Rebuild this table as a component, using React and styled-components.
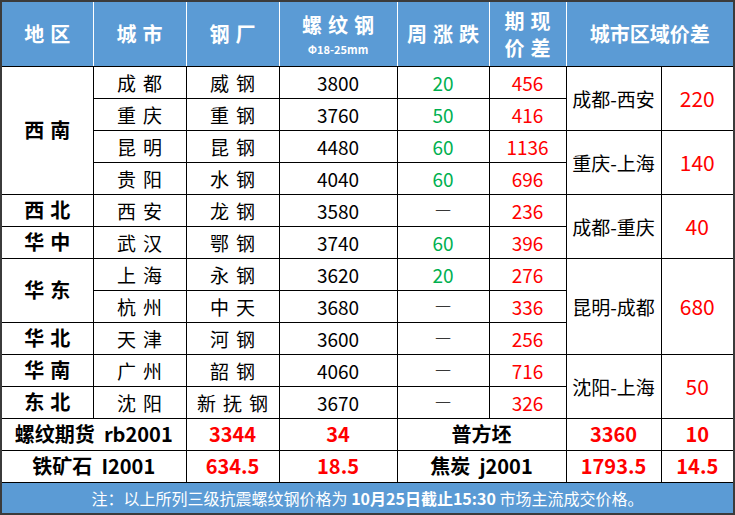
import React from "react";
import styled, { createGlobalStyle } from "styled-components";

const rows = [
  { region: "西南", span: 4, city: "成都", mill: "威钢", price: 3800, week: "20", basis: 456, diff: { name: "成都-西安", value: 220, span: 2 } },
  { city: "重庆", mill: "重钢", price: 3760, week: "50", basis: 416 },
  { city: "昆明", mill: "昆钢", price: 4480, week: "60", basis: 1136, diff: { name: "重庆-上海", value: 140, span: 2 } },
  { city: "贵阳", mill: "水钢", price: 4040, week: "60", basis: 696 },
  { region: "西北", span: 1, city: "西安", mill: "龙钢", price: 3580, week: null, basis: 236, diff: { name: "成都-重庆", value: 40, span: 2 } },
  { region: "华中", span: 1, city: "武汉", mill: "鄂钢", price: 3740, week: "60", basis: 396 },
  { region: "华东", span: 2, city: "上海", mill: "永钢", price: 3620, week: "20", basis: 276, diff: { name: "昆明-成都", value: 680, span: 3 } },
  { city: "杭州", mill: "中天", price: 3680, week: null, basis: 336 },
  { region: "华北", span: 1, city: "天津", mill: "河钢", price: 3600, week: null, basis: 256 },
  { region: "华南", span: 1, city: "广州", mill: "韶钢", price: 4060, week: null, basis: 716, diff: { name: "沈阳-上海", value: 50, span: 2 } },
  { region: "东北", span: 1, city: "沈阳", mill: "新抚钢", price: 3670, week: null, basis: 326 },
];

const futures = [
  { left: "螺纹期货\u00a0\u00a0rb2001", lp: "3344", lc: "34", right: "普方坯", rp: "3360", rc: "10" },
  { left: "铁矿石\u00a0\u00a0I2001", lp: "634.5", lc: "18.5", right: "焦炭\u00a0\u00a0j2001", rp: "1793.5", rc: "14.5" },
];

export default function App() {
  return (
    <>
      <GlobalStyle />
      <Frame>
        <Table>
          <colgroup>
            <col style={{ width: 91 }} />
            <col style={{ width: 93 }} />
            <col style={{ width: 93 }} />
            <col style={{ width: 118 }} />
            <col style={{ width: 92 }} />
            <col style={{ width: 77 }} />
            <col style={{ width: 95 }} />
            <col style={{ width: 72 }} />
          </colgroup>
          <thead>
            <HeadRow>
              <Th $spaced>地区</Th>
              <Th $spaced>城市</Th>
              <Th $spaced>钢厂</Th>
              <Th $spaced>
                <Main>螺纹钢</Main>
                <Sub>Φ18-25mm</Sub>
              </Th>
              <Th $spaced>周涨跌</Th>
              <Th $spaced $small>
                期现
                <br />
                价差
              </Th>
              <Th colSpan={2}>城市区域价差</Th>
            </HeadRow>
          </thead>
          <tbody>
            {rows.map((r, i) => (
              <Row key={i}>
                {r.region && (
                  <Region rowSpan={r.span}>{r.region}</Region>
                )}
                <Name>{r.city}</Name>
                <Name>{r.mill}</Name>
                <Num>{r.price}</Num>
                {r.week ? (
                  <Num $tone="green">{r.week}</Num>
                ) : (
                  <Dash>一</Dash>
                )}
                <Num $tone="red">{r.basis}</Num>
                {r.diff && (
                  <>
                    <Pair rowSpan={r.diff.span}>{r.diff.name}</Pair>
                    <Num $tone="red" $big rowSpan={r.diff.span}>
                      {r.diff.value}
                    </Num>
                  </>
                )}
              </Row>
            ))}
            {futures.map((f, i) => (
              <Row key={"f" + i}>
                <Bold colSpan={2}>{f.left}</Bold>
                <Bold $red>{f.lp}</Bold>
                <Bold $red>{f.lc}</Bold>
                <Bold colSpan={2}>{f.right}</Bold>
                <Bold $red>{f.rp}</Bold>
                <Bold $red>{f.rc}</Bold>
              </Row>
            ))}
            <FootRow>
              <Note colSpan={8}>
                注：以上所列三级抗震螺纹钢价格为 <strong>10月25日截止15:30</strong> 市场主流成交价格。
              </Note>
            </FootRow>
          </tbody>
        </Table>
      </Frame>
    </>
  );
}

//
// Styled Components
//
const GlobalStyle = createGlobalStyle`
  body {
    margin: 0;
    background: #fff;
    font-family: "Noto Sans CJK SC", "Noto Sans", sans-serif;
  }
`;

const Frame = styled.div`
  width: 735px;
  height: 515px;
  box-sizing: border-box;
  border: 2px solid #3b3b3b;
  overflow: hidden;
`;

const Table = styled.table`
  width: 731px;
  height: 511px;
  table-layout: fixed;
  border-collapse: collapse;
  border-style: hidden;
`;

const HeadRow = styled.tr`
  height: 64px;
  background: #5b9bd5;
`;

const Th = styled.th`
  padding: 0;
  padding-left: ${(p) => (p.$spaced ? "6px" : "0")};
  border: 1px solid #fff;
  border-bottom: 1px solid #000;
  color: #fff;
  font-size: 20px;
  font-weight: 700;
  line-height: ${(p) => (p.$small ? "27px" : "24px")};
  letter-spacing: ${(p) => (p.$spaced ? "6px" : "0")};
  text-align: center;
  vertical-align: middle;
`;

const Main = styled.div`
  line-height: 24px;
  margin-top: 2px;
`;

const Sub = styled.div`
  font-size: 11px;
  line-height: 14px;
  letter-spacing: 0;
  margin-top: 5px;
  margin-left: -6px;
`;

const Row = styled.tr`
  height: 32px;
`;

const Cell = styled.td`
  padding: 0;
  border: 1px solid #000;
  text-align: center;
  vertical-align: middle;
  white-space: nowrap;
  line-height: 1;
`;

const Region = styled(Cell)`
  font-size: 20px;
  font-weight: 700;
  letter-spacing: 6px;
  padding-left: 6px;
  color: #000;
`;

const Name = styled(Cell)`
  font-size: 19px;
  letter-spacing: 7px;
  padding-left: 7px;
  color: #000;
`;

const tones = { red: "#ff0000", green: "#00b050", black: "#000" };

const Num = styled(Cell)`
  font-size: ${(p) => (p.$big ? "21px" : "19px")};
  color: ${(p) => tones[p.$tone || "black"]};
`;

const Dash = styled(Cell)`
  font-size: 16px;
  font-weight: 300;
  color: #000;
`;

const Pair = styled(Cell)`
  font-size: 19px;
  color: #000;
`;

const Bold = styled(Cell)`
  font-size: 20px;
  font-weight: 700;
  color: ${(p) => (p.$red ? "#ff0000" : "#000")};
`;

const FootRow = styled.tr`
  height: 31px;
  background: #5b9bd5;
`;

const Note = styled.td`
  padding: 0;
  border-top: 1px solid #000;
  color: #fff;
  font-size: 16px;
  text-align: center;
  vertical-align: middle;

  strong {
    font-weight: 700;
  }
`;
